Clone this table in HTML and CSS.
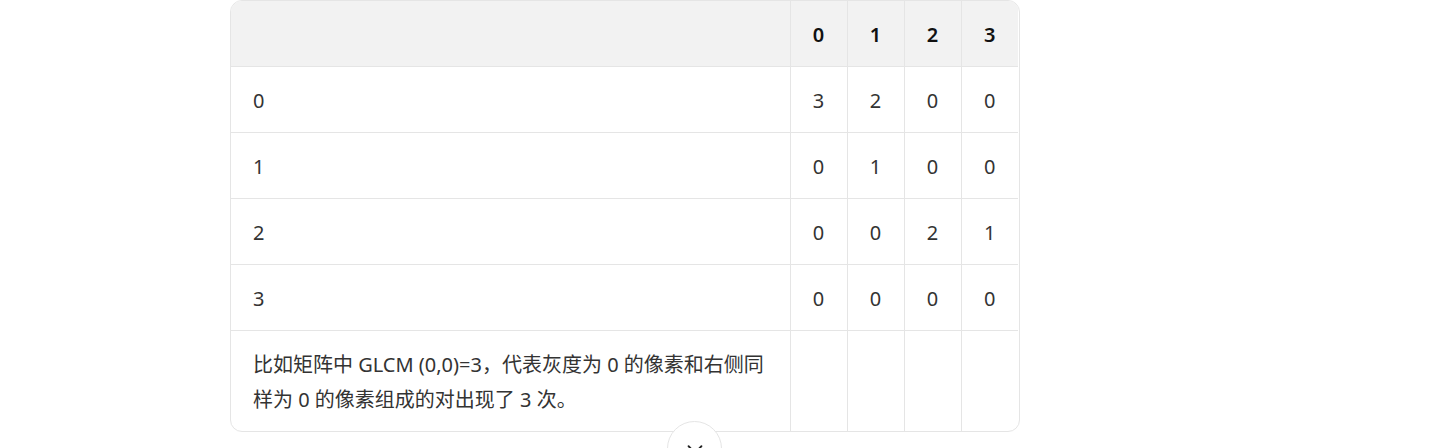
FILE: index.html
```html
<!DOCTYPE html>
<html lang="zh-CN">
<head>
<meta charset="utf-8">
<link rel="stylesheet" href="styles.css">
</head>
<body>
<div class="page">
  <div class="table-wrap">
    <table class="glcm">
      <colgroup>
        <col class="col-label">
        <col class="col-num"><col class="col-num"><col class="col-num"><col class="col-num">
      </colgroup>
      <thead>
        <tr><th class="label"></th><th>0</th><th>1</th><th>2</th><th>3</th></tr>
      </thead>
      <tbody>
        <tr><td class="label">0</td><td>3</td><td>2</td><td>0</td><td>0</td></tr>
        <tr><td class="label">1</td><td>0</td><td>1</td><td>0</td><td>0</td></tr>
        <tr><td class="label">2</td><td>0</td><td>0</td><td>2</td><td>1</td></tr>
        <tr><td class="label">3</td><td>0</td><td>0</td><td>0</td><td>0</td></tr>
        <tr><td class="label"><p class="note">比如矩阵中 GLCM (0,0)=3，代表灰度为 0 的像素和右侧同样为 0 的像素组成的对出现了 3 次。</p></td><td></td><td></td><td></td><td></td></tr>
      </tbody>
    </table>
  </div>
  <button class="scroll-btn" aria-label="scroll down">
    <svg width="22" height="22" viewBox="0 0 24 24" fill="none" stroke="#222" stroke-width="2" stroke-linecap="round" stroke-linejoin="round"><path d="M5 9l7 7 7-7"/></svg>
  </button>
</div>
</body>
</html>
```

FILE: styles.css
```css
html, body {
  margin: 0;
  padding: 0;
  background: #fff;
}
body {
  font-family: "Noto Sans", "Noto Sans CJK SC", sans-serif;
  font-size: 20px;
  color: #333;
  overflow: hidden;
}
.page {
  position: relative;
  width: 1451px;
  height: 448px;
}
.table-wrap {
  margin-left: 230px;
  width: 788px;
  border: 1px solid #e5e5e5;
  border-radius: 12px;
  overflow: hidden;
}
.glcm {
  width: 786px;
  border-collapse: collapse;
  table-layout: fixed;
}
.col-label { width: 559px; }
.col-num { width: 57px; }
.glcm th, .glcm td {
  padding: 16px 0 14px;
  line-height: 35px;
  text-align: center;
  border-left: 1px solid #e5e5e5;
  border-top: 1px solid #e5e5e5;
  vertical-align: middle;
}
.glcm thead th {
  border-top: none;
  background: #f2f2f2;
  color: #111;
  font-weight: 600;
}
.glcm .label {
  text-align: left;
  padding: 16px 22px 14px;
  border-left: none;
}
.note {
  margin: 0;
}
.scroll-btn {
  position: absolute;
  left: 667px;
  top: 421px;
  width: 55px;
  height: 55px;
  border-radius: 50%;
  border: 1px solid #e5e5e5;
  background: #fff;
  padding: 0;
  display: flex;
  align-items: center;
  justify-content: center;
  cursor: pointer;
}
```
